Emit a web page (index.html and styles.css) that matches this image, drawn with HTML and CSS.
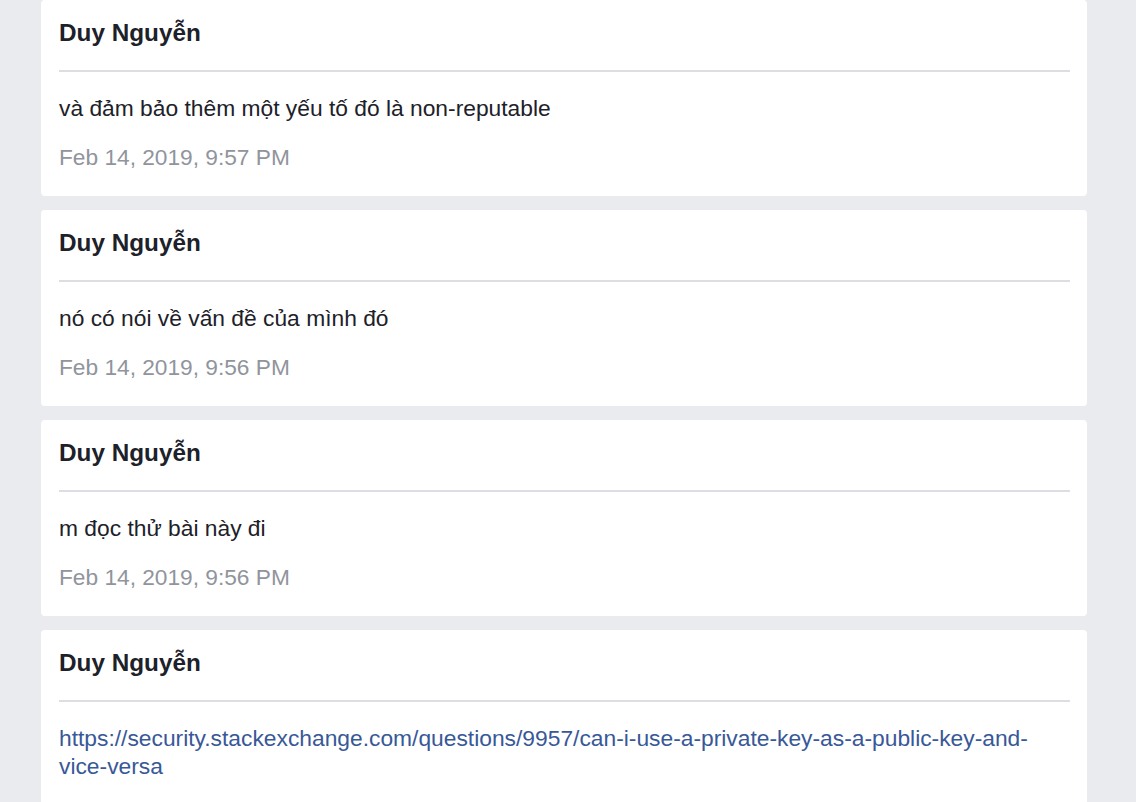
FILE: index.html
```html
<!DOCTYPE html>
<html lang="vi">
<head>
<meta charset="utf-8">
<title>Messages</title>
<link rel="stylesheet" href="styles.css">
</head>
<body>
<div class="feed">
  <div class="card">
    <div class="name">Duy Nguyễn</div>
    <div class="divider"></div>
    <div class="text">và đảm bảo thêm một yếu tố đó là non-reputable</div>
    <div class="time">Feb 14, 2019, 9:57 PM</div>
  </div>
  <div class="card">
    <div class="name">Duy Nguyễn</div>
    <div class="divider"></div>
    <div class="text">nó có nói về vấn đề của mình đó</div>
    <div class="time">Feb 14, 2019, 9:56 PM</div>
  </div>
  <div class="card">
    <div class="name">Duy Nguyễn</div>
    <div class="divider"></div>
    <div class="text">m đọc thử bài này đi</div>
    <div class="time">Feb 14, 2019, 9:56 PM</div>
  </div>
  <div class="card">
    <div class="name">Duy Nguyễn</div>
    <div class="divider"></div>
    <div class="text"><a class="link" href="#">https://security.stackexchange.com/questions/9957/can-i-use-a-private-key-as-a-public-key-and-vice-versa</a></div>
  </div>
</div>
</body>
</html>
```

FILE: styles.css
```css
html, body {
  margin: 0;
  padding: 0;
  background: #e9ebee;
  font-family: "Liberation Sans", Arial, sans-serif;
  color: #1d2129;
  overflow: hidden;
}

.feed {
  display: flex;
  flex-direction: column;
  gap: 14px;
  width: 1046px;
  margin-left: 41px;
}

.card {
  background: #ffffff;
  border-radius: 4px;
  padding: 19px 17px 25px 18px;
  display: flex;
  flex-direction: column;
}

.name {
  font-size: 24.3px;
  font-weight: bold;
  line-height: 28px;
  color: #1d2129;
}

.divider {
  height: 2px;
  background: #dcdee3;
  margin-top: 23px;
  margin-bottom: 22px;
}

.text {
  font-size: 22.8px;
  line-height: 28px;
  color: #1d2129;
}

.link {
  color: #385898;
  text-decoration: none;
}

.time {
  font-size: 22.7px;
  line-height: 28px;
  color: #90949c;
  margin-top: 21px;
}
```
